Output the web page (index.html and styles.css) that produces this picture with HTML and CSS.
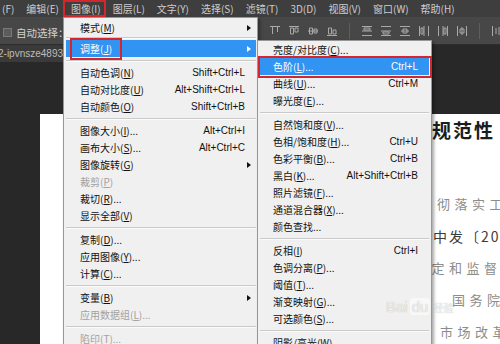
FILE: index.html
```html
<!DOCTYPE html>
<html lang="zh-CN">
<head>
  <meta charset="UTF-8" />
  <title>图像 - 调整 - 色阶</title>
  <link rel="stylesheet" href="styles.css">
</head>
<body>
  <div class="app">

    <div class="menubar">
      <span class="mi first">(F)</span>
      <span class="mi">编辑(E)</span>
      <span class="mi open">图像(I)</span>
      <span class="mi">图层(L)</span>
      <span class="mi">文字(Y)</span>
      <span class="mi">选择(S)</span>
      <span class="mi">滤镜(T)</span>
      <span class="mi">3D(D)</span>
      <span class="mi">视图(V)</span>
      <span class="mi">窗口(W)</span>
      <span class="mi">帮助(H)</span>
    </div>

    <div class="options">
      <span class="check"></span>
      <span class="opt-label">自动选择：</span>
      <span class="opt-select">组</span>
      <div class="tools">
        <svg class="ico" viewBox="0 0 12 12"><path d="M1 1.5h10M3.5 2v7M8.5 2v5"/></svg>
        <svg class="ico" viewBox="0 0 12 12"><path d="M1 1.5h10M2.5 3h3v6h-3zM7 3h3v4h-3z"/></svg>
        <svg class="ico" viewBox="0 0 12 12"><path d="M1 6h10M2.5 3h3v6h-3zM7 4h3v4h-3z"/></svg>
        <svg class="ico" viewBox="0 0 12 12"><path d="M1 10.5h10M2.5 3h3v6h-3zM7 5h3v4h-3z"/></svg>
        <span class="tsep"></span>
        <svg class="ico" viewBox="0 0 12 12"><path d="M1 1.5h10M1 6h10M1 10.5h10M3 3h6v2H3z"/></svg>
        <svg class="ico" viewBox="0 0 12 12"><path d="M1 1.5h10M1 6h10M1 10.5h10M3 7h6v2H3z"/></svg>
        <svg class="ico" viewBox="0 0 12 12"><path d="M1 1.5h10M1 10.5h10M2 6h8M4 4h4v4H4z"/></svg>
        <svg class="ico" viewBox="0 0 12 12"><path d="M1.5 1v10M6 1v10M10.5 1v10M3 3h2v6H3z"/></svg>
        <svg class="ico" viewBox="0 0 12 12"><path d="M1.5 1v10M6 1v10M10.5 1v10M7 3h2v6H7z"/></svg>
        <svg class="ico" viewBox="0 0 12 12"><path d="M1.5 1v10M10.5 1v10M6 2v8M4 4h4v4H4z"/></svg>
        <span class="tsep"></span>
        <svg class="ico" viewBox="0 0 12 12"><path d="M1.5 1v10M5 3v6M8 2v8M10.5 1v10"/></svg>
      </div>
    </div>

    <div class="tabs">
      <div class="tab">2-ipvnsze4893.jpg @ 66.7% (RGB/8)</div>
    </div>

    <div class="work">
      <div class="doc">
        <div class="line head">制度规范性</div>
        <div class="line l2">彻落实工</div>
        <div class="line l3">中发〔2015〕</div>
        <div class="line l4">制定和监督</div>
        <div class="line l5">国务院</div>
        <div class="line l6">市场改革</div>
      </div>
    </div>

    <div class="menu main">
      <div class="row"><span class="t">模式(<u>M</u>)</span><i class="arr"></i></div>
      <div class="sep sm"></div>
      <div class="row hl"><span class="t">调整(<u>J</u>)</span><i class="arr"></i><b class="mark"></b></div>
      <div class="sep"></div>
      <div class="row"><span class="t">自动色调(<u>N</u>)</span><span class="k">Shift+Ctrl+L</span></div>
      <div class="row"><span class="t">自动对比度(<u>U</u>)</span><span class="k">Alt+Shift+Ctrl+L</span></div>
      <div class="row"><span class="t">自动颜色(<u>O</u>)</span><span class="k">Shift+Ctrl+B</span></div>
      <div class="sep"></div>
      <div class="row"><span class="t">图像大小(<u>I</u>)...</span><span class="k">Alt+Ctrl+I</span></div>
      <div class="row"><span class="t">画布大小(<u>S</u>)...</span><span class="k">Alt+Ctrl+C</span></div>
      <div class="row"><span class="t">图像旋转(<u>G</u>)</span><i class="arr"></i></div>
      <div class="row off"><span class="t">裁剪(<u>P</u>)</span></div>
      <div class="row"><span class="t">裁切(<u>R</u>)...</span></div>
      <div class="row"><span class="t">显示全部(<u>V</u>)</span></div>
      <div class="sep"></div>
      <div class="row"><span class="t">复制(<u>D</u>)...</span></div>
      <div class="row"><span class="t">应用图像(<u>Y</u>)...</span></div>
      <div class="row"><span class="t">计算(<u>C</u>)...</span></div>
      <div class="sep"></div>
      <div class="row"><span class="t">变量(<u>B</u>)</span><i class="arr"></i></div>
      <div class="row off"><span class="t">应用数据组(<u>L</u>)...</span></div>
      <div class="sep"></div>
      <div class="row off"><span class="t">陷印(<u>T</u>)...</span></div>
    </div>

    <div class="menu sub">
      <div class="row"><span class="t">亮度/对比度(<u>C</u>)...</span></div>
      <div class="row hl"><span class="t">色阶(<u>L</u>)...</span><span class="k">Ctrl+L</span><b class="mark"></b></div>
      <div class="row"><span class="t">曲线(<u>U</u>)...</span><span class="k">Ctrl+M</span></div>
      <div class="row"><span class="t">曝光度(<u>E</u>)...</span></div>
      <div class="sep"></div>
      <div class="row"><span class="t">自然饱和度(<u>V</u>)...</span></div>
      <div class="row"><span class="t">色相/饱和度(<u>H</u>)...</span><span class="k">Ctrl+U</span></div>
      <div class="row"><span class="t">色彩平衡(<u>B</u>)...</span><span class="k">Ctrl+B</span></div>
      <div class="row"><span class="t">黑白(<u>K</u>)...</span><span class="k">Alt+Shift+Ctrl+B</span></div>
      <div class="row"><span class="t">照片滤镜(<u>F</u>)...</span></div>
      <div class="row"><span class="t">通道混合器(<u>X</u>)...</span></div>
      <div class="row"><span class="t">颜色查找...</span></div>
      <div class="sep"></div>
      <div class="row"><span class="t">反相(<u>I</u>)</span><span class="k">Ctrl+I</span></div>
      <div class="row"><span class="t">色调分离(<u>P</u>)...</span></div>
      <div class="row"><span class="t">阈值(<u>T</u>)...</span></div>
      <div class="row"><span class="t">渐变映射(<u>G</u>)...</span></div>
      <div class="row"><span class="t">可选颜色(<u>S</u>)...</span></div>
      <div class="sep"></div>
      <div class="row"><span class="t">阴影/高光(<u>W</u>)...</span></div>
    </div>

    <div class="watermark">Bai<span class="du">du</span><span class="jy">经验</span></div>

  </div>
</body>
</html>
```

FILE: styles.css
```css
* { box-sizing: border-box; }
html, body {
  margin: 0; padding: 0;
  width: 500px; height: 344px;
  overflow: hidden;
  background: #262626;
  font-family: "Noto Sans CJK SC", "Liberation Sans", sans-serif;
}
.app {
  position: relative;
  width: 500px;
  height: 344px;
  display: flex;
  flex-direction: column;
  overflow: hidden;
}

/* top menu bar */
.menubar {
  height: 17px;
  flex-shrink: 0;
  background: #3e3e3e;
  display: flex;
  align-items: center;
  gap: 12px;
  padding-left: 2px;
  font-size: 10px;
  line-height: 17px;
  color: #cdcdcd;
  white-space: nowrap;
}
.mi { position: relative; }
.mi.open::after {
  content: "";
  position: absolute;
  left: -8px; right: -5px;
  top: 0; bottom: 0;
  border: 2px solid #d4262c;
}

/* options bar */
.options {
  height: 28px;
  flex-shrink: 0;
  background: #474747;
  border-bottom: 1px solid #2c2c2c;
  display: flex;
  align-items: center;
  padding: 3px 0 0 3px;
  color: #d2d2d2;
  font-size: 10.5px;
  white-space: nowrap;
}
.check {
  width: 9px; height: 9px;
  flex-shrink: 0;
  background: #5c5c5c;
  border: 1px solid #7a7a7a;
}
.opt-label { margin-left: 4px; flex-shrink: 0; }
.opt-select { width: 190px; margin-left: 6px; flex-shrink: 0; }
.tools {
  display: flex;
  align-items: center;
  gap: 7px;
  margin-left: 4px;
  margin-top: -3px;
}
.ico {
  width: 12px; height: 12px;
  flex-shrink: 0;
  fill: none;
  stroke: #a9a9a9;
  stroke-width: 1;
}
.tsep {
  width: 1px; height: 16px;
  background: #5e5e5e;
  margin: 0 4px;
  flex-shrink: 0;
}

/* document tab row */
.tabs {
  height: 17px;
  flex-shrink: 0;
  background: #282828;
  display: flex;
}
.tab {
  background: #3a3a3a;
  color: #bdbdbd;
  font-family: "Liberation Sans", sans-serif;
  font-size: 10px;
  line-height: 17px;
  padding: 0 10px 0 0;
  margin-left: -2px;
  white-space: nowrap;
}

/* canvas + document */
.work {
  flex-grow: 1;
  background: #282828;
  padding: 52px 0 0 40px;
  display: flex;
}
.doc {
  flex-grow: 1;
  background: #fff;
  padding-left: 350px;
  color: #8c8c8c;
  font-size: 13px;
  letter-spacing: 4.5px;
  white-space: nowrap;
}
.line { height: 32px; line-height: 32px; }
.line.head {
  color: #1c1c1c;
  font-size: 19px;
  font-weight: 700;
  letter-spacing: 2px;
}
.line.l2 { margin-top: 42px; margin-left: 47px; }
.line.l3 { margin-left: 43px; color: #3c3c3c; font-size: 14px; letter-spacing: 2px; }
.line.l4 { margin-left: 24px; }
.line.l5 { margin-left: 62px; }
.line.l6 { margin-left: 50px; }

/* drop-down menus */
.menu {
  position: absolute;
  background: #f0f0f0;
  border: 1px solid #979797;
  box-shadow: 2px 2px 3px rgba(0, 0, 0, 0.35);
  font-size: 10px;
  color: #111;
}
.menu.main {
  left: 63px; top: 17px;
  width: 195px;
  padding: 1px 1px 0 2px;
  z-index: 2;
}
.menu.sub {
  left: 257px; top: 40px;
  width: 175px;
  padding: 0 2px;
  z-index: 3;
}
.row {
  position: relative;
  height: 17px;
  display: flex;
  align-items: center;
  padding: 0 11px 0 14px;
  white-space: nowrap;
}
.menu.sub .row { padding: 0 11px 0 13px; }
.row u { text-decoration: underline; text-underline-offset: 1px; }
.row .k {
  margin-left: auto;
  font-family: "Liberation Sans", sans-serif;
  font-size: 10px;
}
.row .arr {
  margin-left: auto;
  margin-right: -6px;
  width: 0; height: 0;
  border-left: 4px solid #111;
  border-top: 3.5px solid transparent;
  border-bottom: 3.5px solid transparent;
}
.row.hl { background: #3193f2; color: #fff; }
.row.hl .arr { border-left-color: #fff; }
.row.off { color: #a2a2a2; }
.sep {
  height: 7px;
  position: relative;
}
.sep::after {
  content: "";
  position: absolute;
  left: 0; right: 0; top: 3px;
  border-top: 1px solid #c9c9c9;
  border-bottom: 1px solid #fbfbfb;
}
.sep.sm { height: 4px; }
.sep.sm::after { top: 1px; }

/* red highlight boxes */
.mark {
  position: absolute;
  border: 2px solid #d4262c;
  pointer-events: none;
}
.menu.main .mark { left: 4px; top: -2px; width: 52px; height: 22px; }
.menu.sub .mark { left: -2px; right: -3px; top: -2px; height: 22px; }

/* watermark */
.watermark {
  position: absolute;
  left: 386px; top: 298px;
  z-index: 4;
  font-family: "Liberation Sans", sans-serif;
  font-size: 15px;
  color: rgba(255, 255, 255, 0.75);
  text-shadow: 0 0 1px rgba(0, 0, 0, 0.3);
  white-space: nowrap;
}
.watermark .du {
  display: inline-block;
  margin-left: 2px;
  padding: 0 2px;
  border-radius: 3px;
  background: rgba(255, 255, 255, 0.5);
}
.watermark .jy {
  font-family: "Noto Sans CJK SC", sans-serif;
  font-size: 10px;
  margin-left: 3px;
}
```
